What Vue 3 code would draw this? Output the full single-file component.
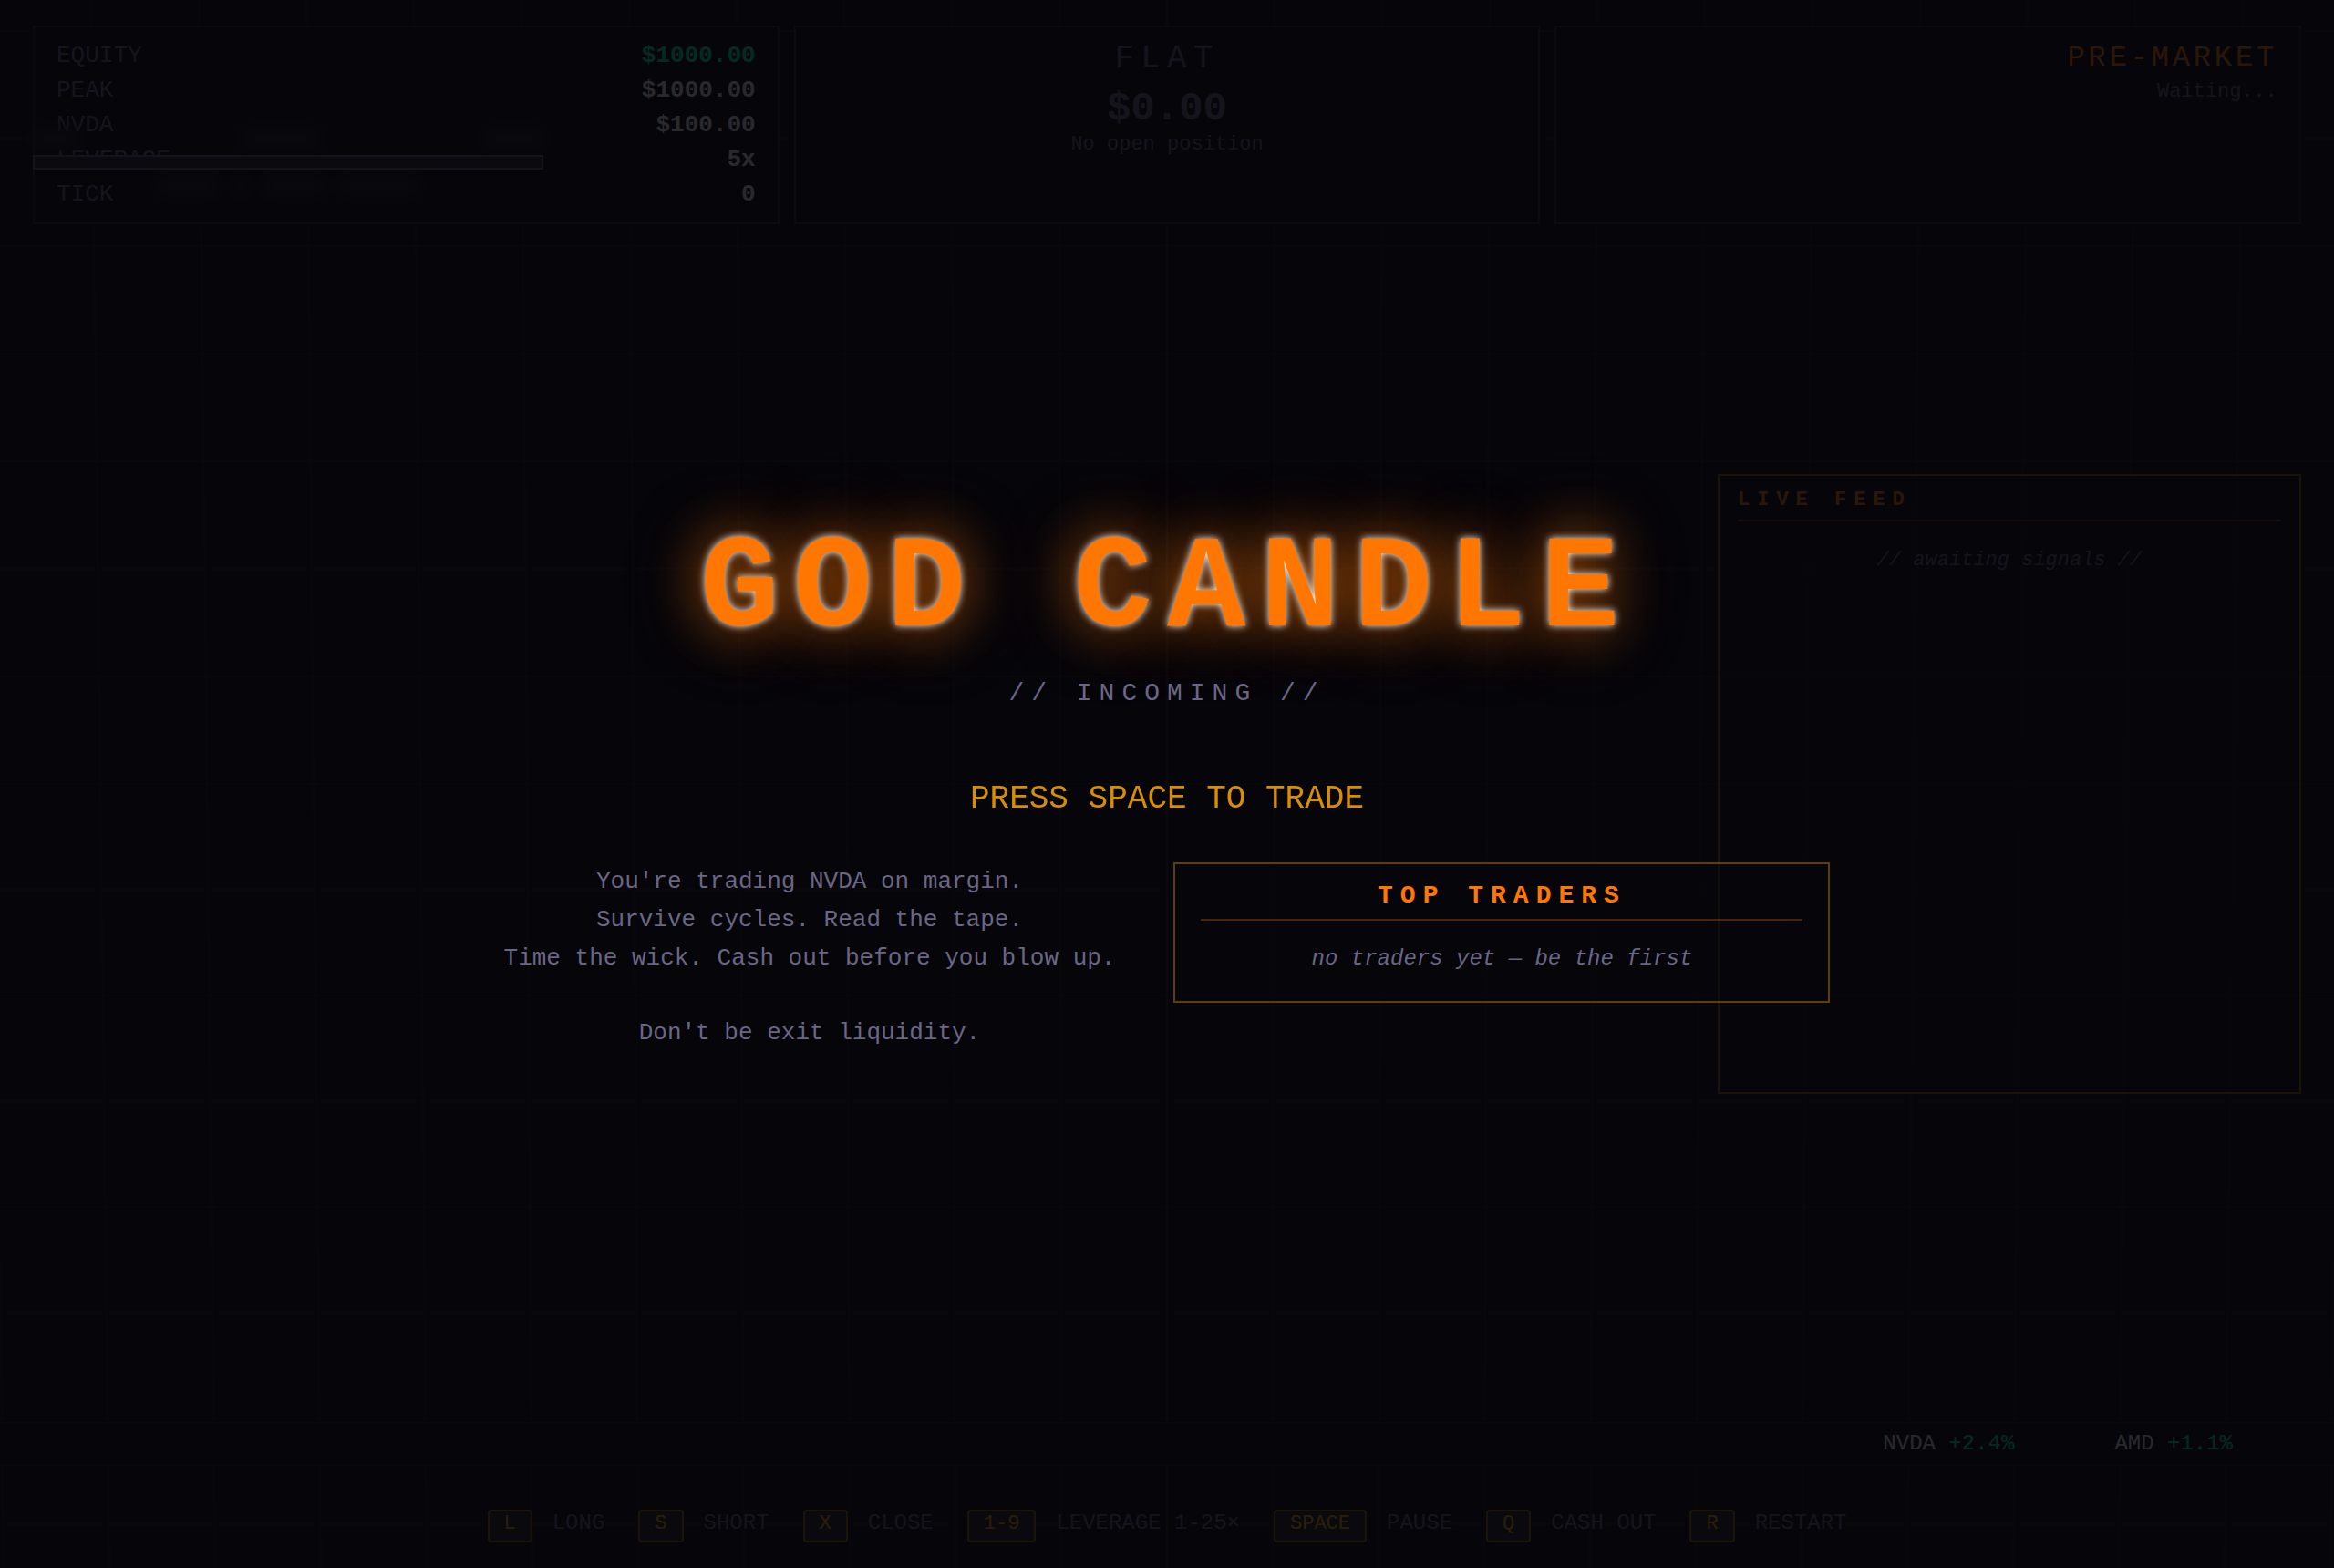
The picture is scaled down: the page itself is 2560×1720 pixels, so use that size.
<script setup>
const stats = [
  { label: 'EQUITY', value: '$1000.00', up: true },
  { label: 'PEAK', value: '$1000.00' },
  { label: 'NVDA', value: '$100.00' },
  { label: 'LEVERAGE', value: '5x' },
  { label: 'TICK', value: '0' },
]

const quotes = [
  { symbol: 'NVDA', change: '+2.4%' },
  { symbol: 'AMD', change: '+1.1%' },
]

const keys = [
  { key: 'L', action: 'LONG' },
  { key: 'S', action: 'SHORT' },
  { key: 'X', action: 'CLOSE' },
  { key: '1-9', action: 'LEVERAGE 1-25×' },
  { key: 'SPACE', action: 'PAUSE' },
  { key: 'Q', action: 'CASH OUT' },
  { key: 'R', action: 'RESTART' },
]

// Market floor grid: a plane tilted slightly away from the viewer,
// so spacing shrinks a little towards the bottom edge.
const columns = Array.from({ length: 23 }, (_, i) => i - 11).map((k) => ({
  id: k,
  x1: 1280 + k * 118,
  x2: 1280 + k * 116,
}))
const rows = Array.from({ length: 15 }, (_, i) => i - 7).map((k) => ({
  id: k,
  y: 860 + k * (k < 0 ? 118 : 116),
}))
</script>

<template>
  <div class="game">
    <svg class="floor" viewBox="0 0 2560 1720" preserveAspectRatio="xMidYMid slice" aria-hidden="true">
      <line v-for="c in columns" :key="'c' + c.id" :x1="c.x1" y1="0" :x2="c.x2" y2="1720" :class="{ axis: c.id === 0 }" />
      <line v-for="r in rows" :key="'r' + r.id" x1="0" :y1="r.y" x2="2560" :y2="r.y" />
    </svg>

    <header class="hud">
      <section class="panel">
        <dl class="stats">
          <div v-for="s in stats" :key="s.label" class="stat">
            <dt>{{ s.label }}</dt>
            <dd :class="{ up: s.up }">{{ s.value }}</dd>
          </div>
        </dl>
        <div class="gauge" aria-hidden="true">
          <div class="ghost ghost-top"><i class="short"></i><i class="long"></i><i class="mid"></i></div>
          <div class="track"></div>
          <div class="ghost ghost-bottom"><i class="mid"></i><i class="dot"></i><i class="mid"></i><i class="long"></i></div>
        </div>
      </section>
      <section class="panel position">
        <p class="side">FLAT</p>
        <p class="pnl">$0.00</p>
        <p class="note">No open position</p>
      </section>
      <section class="panel session">
        <p class="phase">PRE-MARKET</p>
        <p class="note">Waiting...</p>
      </section>
    </header>

    <main class="stage">
      <aside class="feed">
        <h2>LIVE FEED</h2>
        <p>// awaiting signals //</p>
      </aside>
    </main>

    <div class="ticker">
      <span v-for="q in quotes" :key="q.symbol">{{ q.symbol }} <span class="up">{{ q.change }}</span></span>
    </div>

    <footer class="controls">
      <span v-for="k in keys" :key="k.key" class="control"><kbd>{{ k.key }}</kbd><span>{{ k.action }}</span></span>
    </footer>

    <div class="splash">
      <h1>GOD CANDLE</h1>
      <p class="tagline">// INCOMING //</p>
      <p class="prompt">PRESS SPACE TO TRADE</p>
      <div class="intro">
        <div class="pitch">
          <p>You're trading NVDA on margin.<br />Survive cycles. Read the tape.<br />Time the wick. Cash out before you blow up.</p>
          <p>Don't be exit liquidity.</p>
        </div>
        <section class="board">
          <h2>TOP TRADERS</h2>
          <p>no traders yet — be the first</p>
        </section>
      </div>
    </div>
  </div>
</template>

<style>
body {
  margin: 0;
  background: #06060b;
}
</style>

<style scoped>
.game {
  --ink: #06060b;
  --orange: #ff7700;
  --amber: #ffaa00;
  --dim: #6b6685;
  position: relative;
  display: flex;
  flex-direction: column;
  min-height: 100vh;
  overflow: hidden;
  background: var(--ink);
  color: #f0f0f0;
  font-family: "Liberation Mono", "Courier New", monospace;
  font-size: 24px;
}

h1,
h2,
p,
dl,
dd {
  margin: 0;
}

.floor {
  position: absolute;
  inset: 0;
  width: 100%;
  height: 100%;
}

.floor line {
  stroke: #12121a;
  stroke-width: 2;
}

.floor .axis {
  stroke: #1c1c24;
}

.up {
  color: #00ff99;
}

.hud {
  position: relative;
  display: grid;
  grid-template-columns: repeat(3, 1fr);
  gap: 16px;
  padding: 28px 36px 0;
}

.panel {
  position: relative;
  padding: 12px 24px;
  border: 2px solid rgba(255, 119, 0, 0.24);
  background: var(--ink);
}

.stat {
  display: flex;
  justify-content: space-between;
  font-size: 26px;
  line-height: 38px;
}

.stat dt {
  color: var(--dim);
}

.stat dd {
  font-weight: bold;
}

.gauge {
  position: absolute;
  left: -2px;
  top: 112px;
  width: 560px;
}

.track {
  box-sizing: border-box;
  height: 16px;
  margin: 8px 0;
  border: 2px solid var(--dim);
  background: #26262e;
}

.ghost {
  display: flex;
  height: 20px;
  filter: blur(8px);
}

.ghost-top {
  justify-content: space-between;
}

.ghost-bottom {
  justify-content: center;
  gap: 20px;
}

.ghost i {
  background: #1a1a22;
}

.ghost .dot {
  width: 12px;
}

.ghost .short {
  width: 48px;
}

.ghost .mid {
  width: 64px;
}

.ghost .long {
  width: 84px;
}

.position {
  color: var(--dim);
  text-align: center;
}

.side {
  font-size: 36px;
  line-height: 46px;
  letter-spacing: 0.2em;
}

.pnl {
  margin-top: 6px;
  font-size: 44px;
  font-weight: bold;
  line-height: 50px;
}

.note {
  color: var(--dim);
  font-size: 22px;
  line-height: 30px;
}

.session {
  text-align: right;
}

.phase {
  color: var(--orange);
  font-size: 32px;
  line-height: 44px;
  letter-spacing: 0.12em;
}

.stage {
  position: relative;
  display: flex;
  flex: 1;
  justify-content: flex-end;
  align-items: flex-start;
  padding: 274px 36px 0;
}

.feed {
  box-sizing: border-box;
  width: 640px;
  min-height: 680px;
  padding: 14px 20px;
  border: 2px solid rgba(255, 170, 0, 0.55);
  background: rgba(6, 6, 11, 0.6);
  font-size: 22px;
  line-height: 26px;
}

.feed h2 {
  padding-bottom: 8px;
  border-bottom: 2px solid rgba(255, 119, 0, 0.5);
  color: var(--orange);
  font-size: 22px;
  letter-spacing: 8px;
}

.feed p {
  padding-top: 30px;
  color: var(--dim);
  font-style: italic;
  text-align: center;
}

.ticker {
  position: relative;
  display: flex;
  justify-content: flex-end;
  gap: 110px;
  padding-right: 111px;
  border-top: 2px solid rgba(255, 119, 0, 0.18);
  border-bottom: 2px solid rgba(255, 119, 0, 0.18);
  background: var(--ink);
  line-height: 44px;
}

.controls {
  position: relative;
  display: flex;
  justify-content: center;
  gap: 37px;
  padding: 48px 36px 28px;
  color: var(--dim);
}

.control {
  display: flex;
  align-items: baseline;
  gap: 22px;
  height: 36px;
  line-height: 28px;
}

kbd {
  padding: 2px 16px 6px;
  border: 2px solid rgba(255, 170, 0, 0.5);
  border-radius: 4px;
  background: #1e1e26;
  color: var(--amber);
  font-family: inherit;
  font-size: 22px;
  line-height: 24px;
}

.splash {
  position: absolute;
  inset: 0;
  display: flex;
  flex-direction: column;
  align-items: center;
  justify-content: center;
  background: rgba(6, 6, 11, 0.85);
  color: var(--dim);
}

h1 {
  color: var(--orange);
  font-size: 144px;
  line-height: 164px;
  letter-spacing: 16px;
  text-shadow:
    0 0 8px #ffffff,
    0 0 56px rgba(255, 119, 0, 0.6),
    0 0 88px rgba(255, 119, 0, 0.4);
}

.tagline {
  margin-top: 14px;
  font-size: 28px;
  line-height: 34px;
  letter-spacing: 8px;
}

.prompt {
  margin-top: 78px;
  color: var(--amber);
  font-size: 36px;
  line-height: 42px;
  opacity: 0.84;
}

.intro {
  display: flex;
  align-items: flex-start;
  gap: 64px;
  margin-top: 48px;
}

.pitch {
  font-size: 26px;
  line-height: 42px;
  text-align: center;
}

.pitch p + p {
  margin-top: 40px;
}

.board {
  box-sizing: border-box;
  width: 720px;
  padding: 18px 28px;
  border: 2px solid rgba(255, 170, 0, 0.35);
  background: rgba(6, 6, 11, 0.4);
  text-align: center;
}

.board h2 {
  padding-bottom: 8px;
  border-bottom: 2px solid rgba(255, 119, 0, 0.28);
  color: var(--orange);
  font-size: 28px;
  line-height: 34px;
  letter-spacing: 8px;
}

.board p {
  padding: 28px 0 14px;
  font-style: italic;
  line-height: 28px;
}
</style>
